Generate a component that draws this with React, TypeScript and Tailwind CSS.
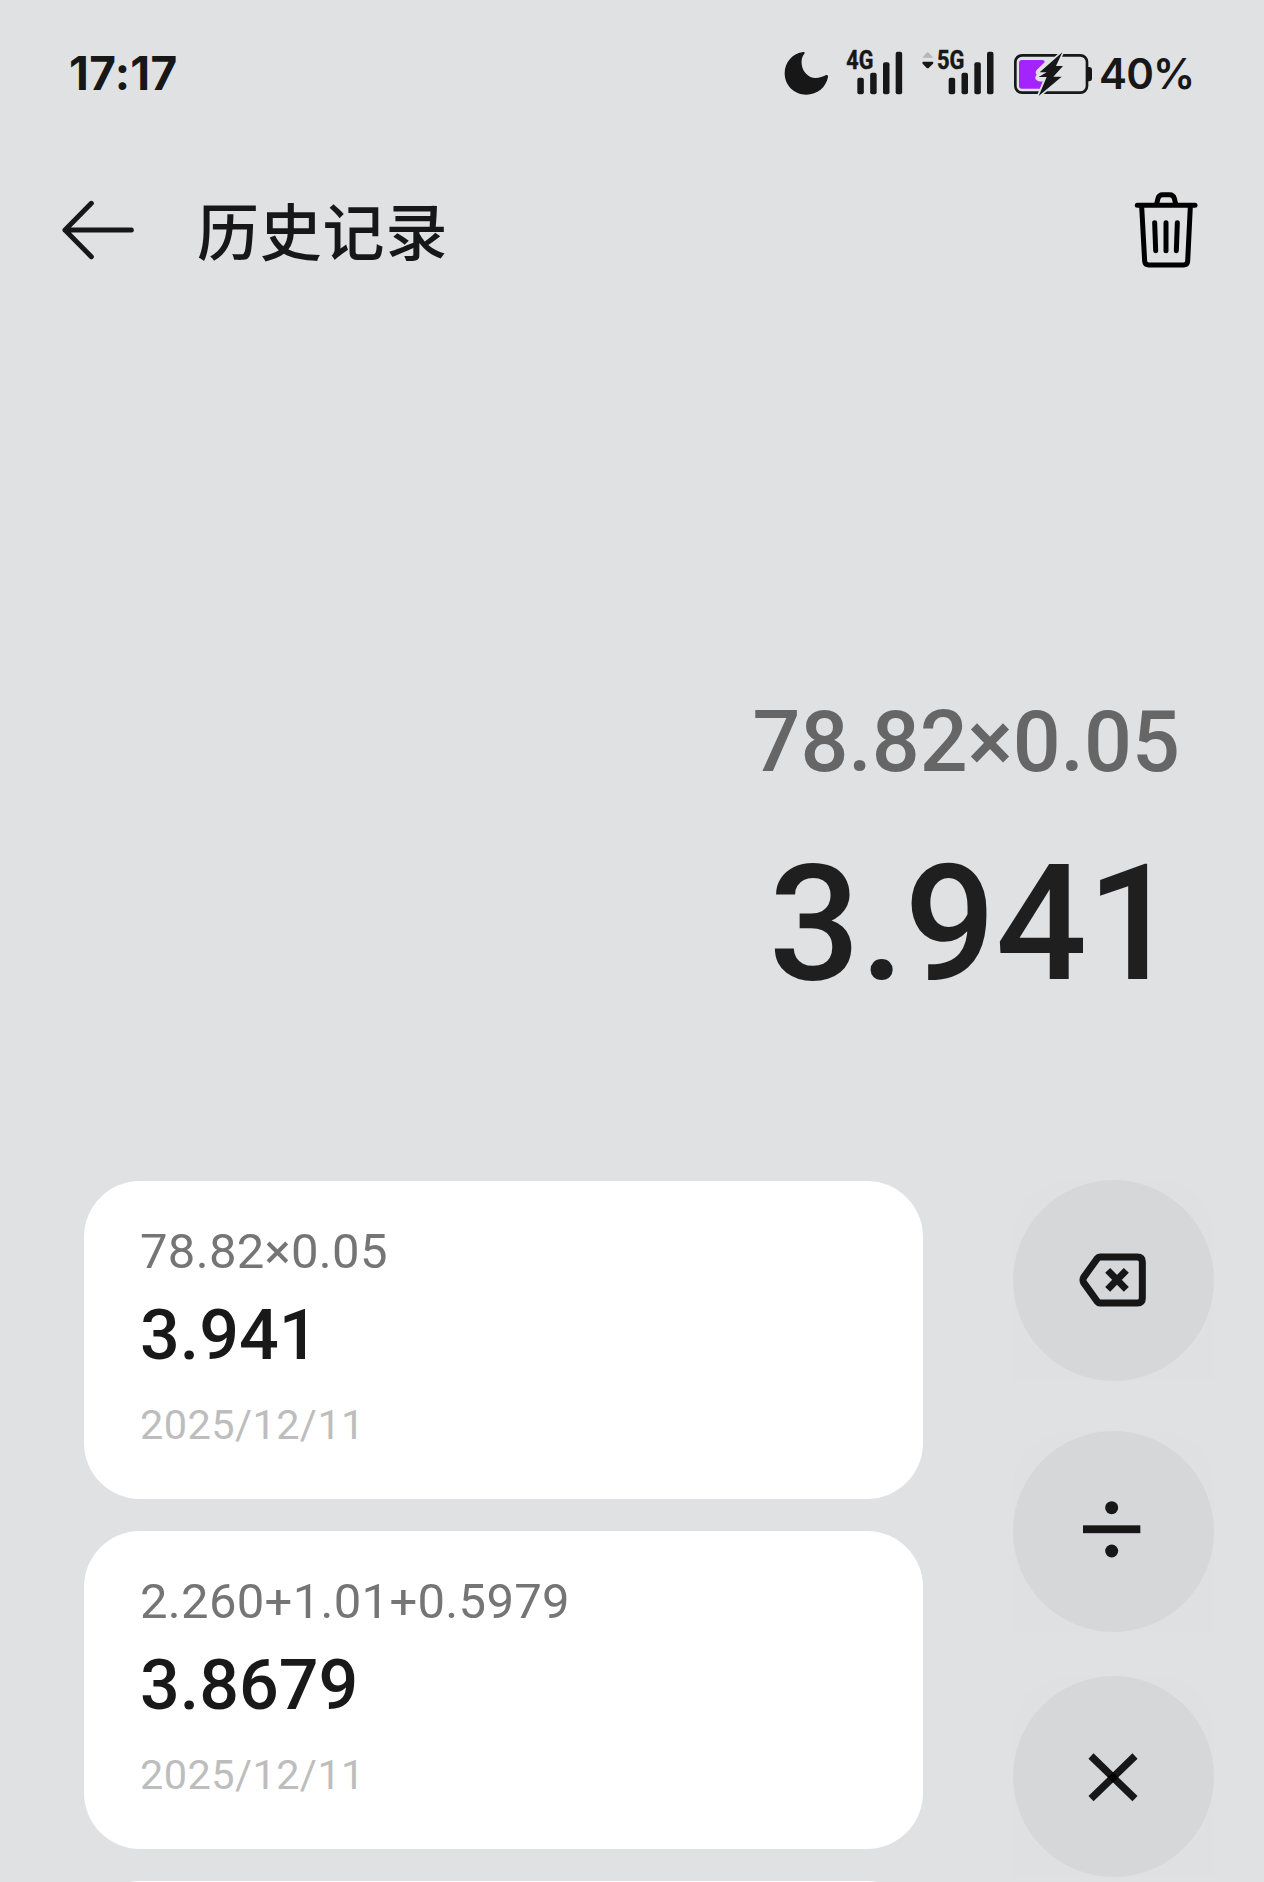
import type { ReactNode } from "react";

const history = [
  { id: 1, expression: "78.82×0.05", result: "3.941", date: "2025/12/11" },
  { id: 2, expression: "2.260+1.01+0.5979", result: "3.8679", date: "2025/12/11" },
  { id: 3, expression: "", result: "", date: "" },
];

function MoonIcon() {
  return (
    <svg width="47" height="80" viewBox="39 0 141 240" fill="#171717">
      <path d="M100 66C105 65 105 69 102 73C96 81 94 90 95 102C97 125 115 144 137 144C149 144 158 140 167 136C172 134 175 137 174 141C168 172 142 194 109 194C72 194 44 166 44 130C44 96 68 70 100 66Z" />
    </svg>
  );
}

function SignalBars() {
  return (
    <g fill="#171717">
      <rect x="0" y="79" width="19.5" height="49" rx="6" />
      <rect x="38.5" y="64" width="19.5" height="64" rx="6" />
      <rect x="77" y="32" width="19.5" height="96" rx="6" />
      <rect x="115" y="1" width="19.5" height="127" rx="6" />
    </g>
  );
}

function Signal4G() {
  return (
    <svg width="57" height="80" viewBox="228 0 171 240">
      <text x="229" y="118" textLength="81" lengthAdjust="spacingAndGlyphs" className="fill-[#171717] stroke-[#171717] stroke-[1.5px] font-['Roboto',sans-serif] text-[75px] font-bold">
        4G
      </text>
      <g transform="translate(262 64.5)">
        <SignalBars />
      </g>
    </svg>
  );
}

function Signal5G() {
  return (
    <svg width="73" height="80" viewBox="453 0 219 240">
      <path d="M457 83.5L470 68Q473 65 476 68L490 83.5Z" fill="#b4b5b6" />
      <path d="M459 95H488Q492 97 489 101L476 114Q473 116 470 114L458 101Q455 97 459 95Z" fill="#171717" />
      <text x="501" y="118" textLength="82" lengthAdjust="spacingAndGlyphs" className="fill-[#171717] stroke-[#171717] stroke-[1.5px] font-['Roboto',sans-serif] text-[75px] font-bold">
        5G
      </text>
      <g transform="translate(536 64.5)">
        <SignalBars />
      </g>
    </svg>
  );
}

function BatteryIcon() {
  return (
    <svg width="80" height="80" viewBox="39 0 240 240">
      <rect x="46" y="76" width="215" height="112" rx="20" fill="none" stroke="#171717" strokeWidth="8" />
      <path d="M66 90H126Q134 90 134 97L110 120Q104 128 110 134Q102 144 110 151Q117 156 129 154L120 176H66Q57 176 57 167V99Q57 90 66 90Z" fill="#a424ff" />
      <path d="M187 67L119 127H144L116 141H140L116 198L185 140H160L188 108H168Z" fill="none" stroke="#e0e1e3" strokeWidth="10" strokeLinejoin="round" />
      <path d="M263 111H267Q276 111 276 120V145Q276 154 267 154H263Z" fill="#171717" />
      <path d="M187 67L119 127H140L116 141H140L116 198L185 140H160L189 108H168Z" fill="#171717" />
    </svg>
  );
}

function BackIcon() {
  return (
    <svg width="72" height="60" viewBox="66 510 216 180" fill="none" stroke="#171717" strokeWidth="15" strokeLinecap="round" strokeLinejoin="round">
      <path d="M75 600H274M154 520L75 600L154 680" />
    </svg>
  );
}

function TrashIcon() {
  return (
    <svg width="66" height="80" viewBox="99 60 198 240" fill="none" stroke="#000" strokeWidth="15" strokeLinecap="round" strokeLinejoin="round">
      <path d="M112 106H285" />
      <path d="M170 102L174 85Q177 74 188 74H209Q220 74 223 85L227 102" />
      <path d="M125 109L134 274Q135 285 146 285H251Q262 285 263 274L271 109" />
      <path d="M164 158L167 242M198 158V242M232 158L229 242" />
    </svg>
  );
}

function BackspaceIcon() {
  return (
    <svg width="201" height="201" viewBox="39 30 603 603" fill="none" stroke="#171717" strokeWidth="21" strokeLinejoin="round">
      <path d="M300 261H412Q427 261 427 276V384Q427 399 412 399H300Q295 399 292 395L251 338Q247 330 251 322L292 265Q295 261 300 261Z" />
      <path d="M323 301L379 358M379 301L323 358" />
    </svg>
  );
}

function DivideIcon() {
  return (
    <svg width="201" height="201" viewBox="39 32 603 603" fill="#171717">
      <circle cx="335" cy="262" r="19.5" />
      <rect x="249" y="315" width="172" height="23.5" />
      <circle cx="335" cy="392" r="19.5" />
    </svg>
  );
}

function MultiplyIcon() {
  return (
    <svg width="201" height="201" viewBox="39 48 603 603" fill="none" stroke="#171717" strokeWidth="22">
      <path d="M273 288L405 416M405 288L273 416" />
      <path d="M339 336L355 352L339 368L323 352Z" fill="#000" stroke="none" />
    </svg>
  );
}

function KeyButton({ label, children }: { label: string; children: ReactNode }) {
  return (
    <div className="rounded-t-[56px] bg-[#dfe0e2]">
      <button aria-label={label} className="block size-[201px] rounded-full bg-[#d6d7d9]">
        {children}
      </button>
    </div>
  );
}

export default function App() {
  return (
    <main className="flex h-[1882px] w-[1264px] flex-col overflow-hidden bg-[#e0e1e3] font-['Roboto','Noto_Sans_CJK_SC',sans-serif] text-[#171717]">
      {/* Status bar */}
      <div className="mt-[30px] flex h-20 shrink-0 items-center pl-[69px] font-['Inter',sans-serif]">
        <span className="mt-[5px] text-[46px] leading-[56px] font-bold tracking-[0.3px]">17:17</span>
        <div className="ml-auto flex w-[481px] items-center">
          <MoonIcon />
          <div className="ml-4">
            <Signal4G />
          </div>
          <div className="ml-[18px]">
            <Signal5G />
          </div>
          <div className="ml-[19px]">
            <BatteryIcon />
          </div>
          <span className="mt-[7px] ml-1.5 text-[42px] leading-[52px] font-semibold tracking-[-0.8px]">40%</span>
        </div>
      </div>

      {/* Header */}
      <header className="mt-20 flex h-20 shrink-0 items-center pr-[65px] pl-[62px]">
        <button aria-label="返回">
          <BackIcon />
        </button>
        <h1 className="mb-[3px] ml-[63px] font-['Noto_Sans_CJK_SC',sans-serif] text-[62px] leading-20 font-medium tracking-[0.8px]">历史记录</h1>
        <button aria-label="清空" className="ml-auto">
          <TrashIcon />
        </button>
      </header>

      {/* Current calculation */}
      <section className="mt-[423px] flex h-[488px] shrink-0 flex-col items-end pr-[84px] font-medium">
        <p className="text-[84.4px] leading-[100px] text-[#666]">78.82×0.05</p>
        <p className="mt-9 mr-0.5 text-[161px] leading-[190px] tracking-[-0.3px] text-[#1f1f1f]">3.941</p>
      </section>

      {/* History and keys */}
      <section className="flex shrink-0 items-start pl-[84px]">
        <ul className="flex w-[839px] flex-col gap-8">
          {history.map((item) => (
            <li key={item.id} className="h-[318px] rounded-[56px] bg-white pt-[42px] pl-14">
              <p className="text-[49px] leading-[58px] tracking-[0.3px] text-[#757575]">{item.expression}</p>
              <p className="mt-[13px] text-[70px] leading-[82px] font-medium text-[#191919]">{item.result}</p>
              <p className="mt-6 text-[41.5px] leading-[50px] tracking-[0.4px] text-[#bdbdbd]">{item.date}</p>
            </li>
          ))}
        </ul>
        <div className="-mt-px ml-[90px] flex flex-col">
          <KeyButton label="退格">
            <BackspaceIcon />
          </KeyButton>
          <div className="mt-[50px]">
            <KeyButton label="除">
              <DivideIcon />
            </KeyButton>
          </div>
          <div className="mt-11">
            <KeyButton label="乘">
              <MultiplyIcon />
            </KeyButton>
          </div>
        </div>
      </section>
    </main>
  );
}
